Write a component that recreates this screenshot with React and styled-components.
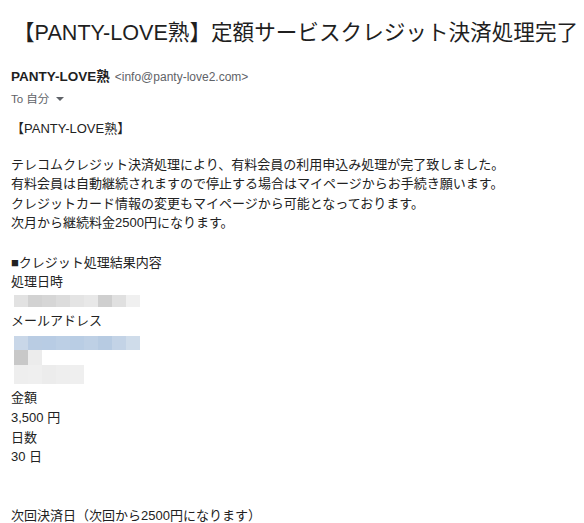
import React from "react";
import styled, { createGlobalStyle } from "styled-components";

const GlobalStyle = createGlobalStyle`
  html, body {
    margin: 0;
    background: #ffffff;
  }
  body {
    font-family: "Liberation Sans", Arial, "Noto Sans CJK JP", sans-serif;
    color: #222222;
  }
`;

const Page = styled.div`
  width: 584px;
  height: 523px;
  overflow: hidden;
  padding: 0 0 0 11px;
  box-sizing: border-box;
`;

const Subject = styled.h1`
  margin: 0;
  padding: 19px 0 0 2px;
  font-size: 21.6px;
  line-height: 28px;
  font-weight: 400;
  color: #1f1f1f;
  white-space: nowrap;
`;

const Sender = styled.div`
  margin-top: 21px;
  display: flex;
  align-items: baseline;
  gap: 5px;
  line-height: 18px;
`;

const SenderName = styled.span`
  font-size: 13.5px;
  font-weight: 700;
  color: #1f1f1f;
`;

const SenderAddr = styled.span`
  font-size: 12px;
  color: #5f6368;
`;

const ToLine = styled.div`
  margin-top: 5px;
  font-size: 11.5px;
  line-height: 16px;
  color: #5f6368;
  display: flex;
  align-items: center;
  gap: 5px;
`;

const Caret = styled.span`
  width: 0;
  height: 0;
  border-left: 4px solid transparent;
  border-right: 4px solid transparent;
  border-top: 4px solid #5f6368;
  margin-left: 2px;
`;

const Body = styled.div`
  margin-top: 12px;
  font-size: 13px;
  line-height: 19.6px;
  color: #222222;
`;

const Line = styled.div`
  min-height: 19.6px;
  white-space: nowrap;
  margin-top: ${(p) => p.$gap || 0}px;
`;

const Mosaic = styled.div`
  display: flex;
  flex-direction: column;
  padding: ${(p) => p.$pad || "0"};
`;

const MosaicRow = styled.div`
  display: flex;
  height: ${(p) => p.$h}px;
`;

const Cell = styled.div`
  width: ${(p) => p.$w || 14}px;
  height: 100%;
  background: ${(p) => p.$c};
`;

const dateCells = ["#e2e2e2", "#d2d2d2", "#d6d6d6", "#dcdcdc", "#e4e4e4", "#e8e8e8", "#cfcfcf", "#e0e0e0", "#f0f0f0"];
const mailCells = ["#c9d7e8", "#b9cce3", "#b8cce4", "#bccfe5", "#b9cde4", "#bed0e5", "#b7cbe2", "#c3d3e6", "#cfdcea"];

export default function App() {
  return (
    <Page>
      <GlobalStyle />
      <Subject>【PANTY-LOVE熟】定額サービスクレジット決済処理完了</Subject>
      <Sender>
        <SenderName>PANTY-LOVE熟</SenderName>
        <SenderAddr>&lt;info@panty-love2.com&gt;</SenderAddr>
      </Sender>
      <ToLine>
        To 自分 <Caret />
      </ToLine>
      <Body>
        <Line>【PANTY-LOVE熟】</Line>
        <Line $gap={16}>テレコムクレジット決済処理により、有料会員の利用申込み処理が完了致しました。</Line>
        <Line>有料会員は自動継続されますので停止する場合はマイページからお手続き願います。</Line>
        <Line>クレジットカード情報の変更もマイページから可能となっております。</Line>
        <Line>次月から継続料金2500円になります。</Line>
        <Line />
        <Line>■クレジット処理結果内容</Line>
        <Line>処理日時</Line>
        <Mosaic $pad="3px 0 4px 3px">
          <MosaicRow $h={12}>
            {dateCells.map((c, i) => (
              <Cell key={i} $c={c} />
            ))}
          </MosaicRow>
        </Mosaic>
        <Line>メールアドレス</Line>
        <Mosaic $pad="6px 0 4px 3px">
          <MosaicRow $h={14}>
            {mailCells.map((c, i) => (
              <Cell key={i} $c={c} />
            ))}
          </MosaicRow>
          <MosaicRow $h={15}>
            <Cell $c="#c8c8c8" />
            <Cell $c="#ececec" />
          </MosaicRow>
          <MosaicRow $h={19}>
            <Cell $c="#eeeeee" />
            <Cell $c="#efefef" />
            <Cell $c="#ececec" />
            <Cell $c="#eeeeee" />
            <Cell $c="#efefef" />
          </MosaicRow>
        </Mosaic>
        <Line>金額</Line>
        <Line>3,500 円</Line>
        <Line>日数</Line>
        <Line>30 日</Line>
        <Line />
        <Line />
        <Line>次回決済日（次回から2500円になります）</Line>
      </Body>
    </Page>
  );
}
